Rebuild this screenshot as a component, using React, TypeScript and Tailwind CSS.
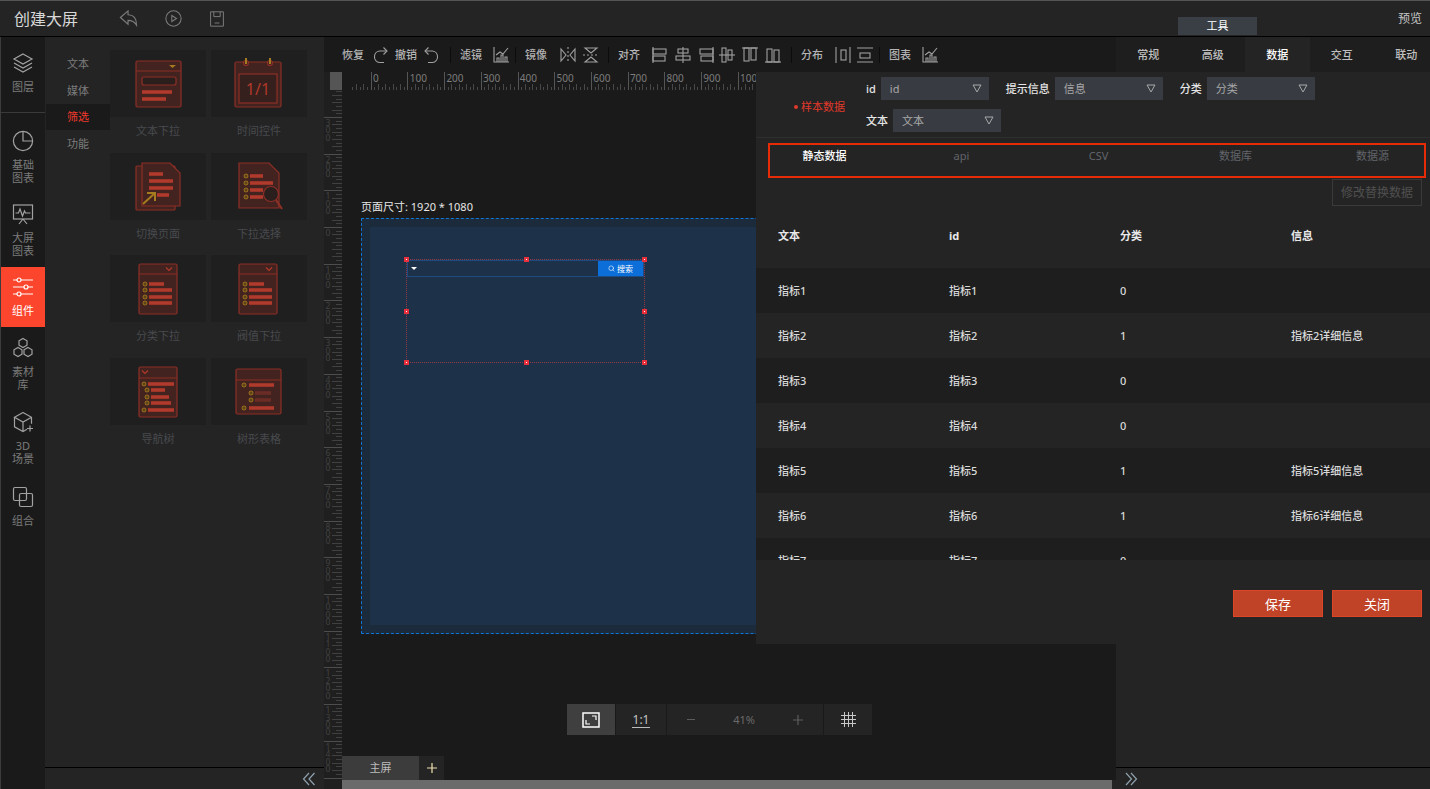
import type { ReactNode } from "react";
import { Search } from "lucide-react";

// --- shared drawing bits ---

const Ico = ({ size = 22, box = 22, children, className = "" }: { size?: number; box?: number; children: ReactNode; className?: string }) => (
  <svg width={size} height={size} viewBox={`0 0 ${box} ${box}`} fill="none" stroke="currentColor" strokeWidth={1.2} className={`shrink-0 ${className}`}>
    {children}
  </svg>
);

const navItems = [
  {
    label: ["图层"],
    cls: "h-[76px] pt-[15px] border-b border-[#3a3a3a]",
    icon: (<><path d="M11 2 20 7 11 12 2 7Z" /><path d="M2 11l9 5 9-5" /><path d="M2 15l9 5 9-5" /></>),
  },
  {
    label: ["基础", "图表"],
    cls: "h-[79px] pt-[17px]",
    icon: (<><circle cx="11" cy="11" r="9.6" /><path d="M11 1.5V11H20.5" /></>),
  },
  {
    label: ["大屏", "图表"],
    cls: "h-[75px] pt-[11px]",
    icon: (<><rect x="1.5" y="2" width="19" height="14" /><path d="M3.5 10h3l1.5-4 2.5 7 2-5 1 2h5" /><path d="M11 16l-4 5M11 16l4 5" /></>),
  },
  {
    label: ["组件"],
    cls: "h-[60px] pt-[9px] bg-[#fc452d] text-white",
    icon: (<><path d="M1 4h20M1 11h20M1 18h20" /><circle cx="7" cy="4" r="2" fill="#fc452d" /><circle cx="14" cy="11" r="2" fill="#fc452d" /><circle cx="7" cy="18" r="2" fill="#fc452d" /></>),
  },
  {
    label: ["素材", "库"],
    cls: "h-[84px] pt-[10px]",
    icon: (<><path d="M11 1.5l4 2.3v4.4l-4 2.3-4-2.3V3.8Z" /><path d="M6 10.5l4 2.3v4.4l-4 2.3-4-2.3v-4.4Z" /><path d="M16 10.5l4 2.3v4.4l-4 2.3-4-2.3v-4.4Z" /></>),
  },
  {
    label: ["3D", "场景"],
    cls: "h-[75px]",
    icon: (<><path d="M11 1.5l8.5 4.8v6.5M19.5 6.3 11 11 2.5 6.3 11 1.5M2.5 6.3v9.5l8.5 4.7 4-2.2M11 11v9.5" /><path d="M18 14.5v6M15 17.5h6" /></>),
  },
  {
    label: ["组合"],
    cls: "h-[60px]",
    icon: (<><rect x="1.5" y="1.5" width="13" height="13" rx="1.5" /><rect x="7.5" y="7.5" width="13" height="13" rx="1.5" /></>),
  },
];

const S = "#8c2f27";
const F = "#43231f";
const B = "#b03a2b";
const D = "#a67a1e";

const Bar = ({ x, y, w, dim }: { x: number; y: number; w: number; dim?: boolean }) => (
  <rect x={x} y={y - 1.8} width={w} height={3.6} fill={dim ? "#6b2c25" : B} stroke="none" />
);
const Dot = ({ x, y }: { x: number; y: number }) => (
  <rect x={x - 1.8} y={y - 1.8} width={3.6} height={3.6} rx={1.2} fill="#5f4318" stroke={D} strokeWidth={1} />
);
const Chev = ({ x, y }: { x: number; y: number }) => <path d={`M${x - 3} ${y - 1.5}l3 3 3-3`} stroke="#b03a2b" strokeWidth={1.2} fill="none" />;

const Art = ({ children }: { children: ReactNode }) => (
  <svg width="96" height="67" viewBox="0 0 96 67" fill={F} stroke={S} strokeWidth={1.2}>
    {children}
  </svg>
);

const Fold = ({ x, y, r, b }: { x: number; y: number; r: number; b: number }) => (
  <path d={`M${x} ${y}H${r - 10}L${r} ${y + 10}V${b}H${x}Z`} />
);

const listPanel = (x: number) => (
  <>
    <rect x={x} y="9" width="38" height="50" rx="1.5" />
    <path d={`M${x} 19H${x + 38}`} />
    <Chev x={x + 30} y={14} />
    {[29, 35, 42, 48].map((y, i) => (
      <g key={y}>
        <Dot x={x + 6} y={y} />
        <Bar x={x + 10} y={y} w={i === 0 ? 15 : 23} />
      </g>
    ))}
  </>
);

const cards: { label: string; art: ReactNode }[] = [
  {
    label: "文本下拉",
    art: (
      <Art>
        <rect x="26" y="11" width="45" height="46" rx="1.5" />
        <path d="M26 21H71" />
        <path d="M59 15h7l-3.5 3Z" fill={D} stroke="none" />
        <rect x="32" y="27" width="34" height="8" rx="2" fill="#2a1f1d" />
        <Bar x={32} y={42} w={30} />
        <Bar x={32} y={49} w={24} />
      </Art>
    ),
  },
  {
    label: "时间控件",
    art: (
      <Art>
        <rect x="24" y="12" width="46" height="45" rx="1.5" />
        <rect x="28" y="24" width="38" height="29" fill="#35201d" />
        <circle cx="35" cy="13" r="2.5" />
        <circle cx="59" cy="13" r="2.5" />
        <path d="M35 8v6M59 8v6" stroke={D} strokeWidth="2" />
        <text x="47" y="45" textAnchor="middle" fontSize="16" fill={B} stroke="none">1/1</text>
      </Art>
    ),
  },
  {
    label: "切换页面",
    art: (
      <Art>
        <rect x="26" y="13" width="39" height="44" rx="1" />
        <Fold x={32} y={10} r={70} b={53} />
        <Bar x={39} y={21} w={14} />
        <Bar x={39} y={28} w={24} />
        <Bar x={39} y={35} w={24} />
        <Bar x={47} y={42} w={12} />
        <path d="M33 51 45 40M37 40h8v8" stroke={D} strokeWidth="2" fill="none" />
      </Art>
    ),
  },
  {
    label: "下拉选择",
    art: (
      <Art>
        <Fold x={28} y={10} r={68} b={55} />
        {[23, 30, 37, 44].map((y, i) => (
          <g key={y}>
            <Dot x={35} y={y} />
            <Bar x={39} y={y} w={i === 1 ? 23 : 13} />
          </g>
        ))}
        <path d="M65 47l6 9" strokeWidth="2.2" />
        <circle cx="60" cy="41" r="7.5" fill="#2a1f1d" />
      </Art>
    ),
  },
  { label: "分类下拉", art: <Art>{listPanel(29)}</Art> },
  { label: "阀值下拉", art: <Art>{listPanel(28)}</Art> },
  {
    label: "导航树",
    art: (
      <Art>
        <rect x="29" y="9" width="38" height="50" rx="1.5" />
        <path d="M29 20H67" />
        <Chev x={35} y={14} />
        <Dot x={34} y={26} />
        <Bar x={38} y={26} w={26} />
        <Dot x={37} y={32} />
        <Bar x={41} y={32} w={14} />
        <Dot x={37} y={39} />
        <Bar x={41} y={39} w={18} />
        <Dot x={37} y={45} />
        <Bar x={41} y={45} w={20} />
        <Dot x={34} y={52} />
        <Bar x={38} y={52} w={26} />
      </Art>
    ),
  },
  {
    label: "树形表格",
    art: (
      <Art>
        <rect x="25" y="11" width="45" height="45" rx="1.5" />
        <path d="M25 22H70" />
        <Dot x={33} y={27} />
        <Bar x={38} y={27} w={25} />
        <Dot x={40} y={35} />
        <Bar x={44} y={35} w={16} dim />
        <Dot x={40} y={42} />
        <Bar x={44} y={42} w={16} dim />
        <Dot x={33} y={50} />
        <Bar x={38} y={50} w={25} />
      </Art>
    ),
  },
];

const rows = [
  ["指标1", "指标1", "0", ""],
  ["指标2", "指标2", "1", "指标2详细信息"],
  ["指标3", "指标3", "0", ""],
  ["指标4", "指标4", "0", ""],
  ["指标5", "指标5", "1", "指标5详细信息"],
  ["指标6", "指标6", "1", "指标6详细信息"],
  ["指标7", "指标7", "0", ""],
];

// --- toolbar icons ---

const T = ({ children, w = 18 }: { children: ReactNode; w?: number }) => (
  <svg width={w} height="18" viewBox={`0 0 ${w} 18`} fill="none" stroke="#a0a0a0" strokeWidth={1.1} className="shrink-0">
    {children}
  </svg>
);
const ChartIco = () => (
  <T>
    <path d="M2 1V16H17" />
    <path d="M5 16v-4h2v4M9 16V9h2v7M13 16v-5h2v5M4 9l4-3 3 2 5-6" />
  </T>
);
const Sep = () => <span className="block h-[16px] w-px shrink-0 bg-[#0c0c0c]" />;
const TLabel = ({ children }: { children: ReactNode }) => <span className="shrink-0 font-medium text-[#b4b4b4]">{children}</span>;

const tabs = ["常规", "高级", "数据", "交互", "联动"];

const Select = ({ value, w = "w-[108px]" }: { value: string; w?: string }) => (
  <div className={`flex h-[23px] ${w} items-center justify-between bg-[#383c42] pl-[9px] pr-[7px] text-[#a8a8a8]`}>
    <span>{value}</span>
    <svg width="10" height="9" viewBox="0 0 10 9" fill="none" stroke="#a8a8a8">
      <path d="M1 1h8L5 8Z" />
    </svg>
  </div>
);

const Field = ({ label, value }: { label: string; value: string }) => (
  <div className="flex items-center gap-[5px]">
    <span className="font-medium text-[#e4e4e4]">{label}</span>
    <Select value={value} />
  </div>
);

// --- rulers ---

const step = 36.7;

const HRuler = () => (
  <svg width="774" height="18" className="block" shapeRendering="crispEdges">
    {Array.from({ length: 211 }).map((_, i) => {
      const x = Math.round(28.7 + (i - 5) * (step / 10));
      const major = (i - 5) % 10 === 0;
      const mid = (i - 5) % 2 !== 0;
      if (x < 0) return null;
      return <line key={i} x1={x + 0.5} x2={x + 0.5} y1={major ? 0 : mid ? 15 : 12} y2={18} stroke={major ? "#555" : "#484848"} />;
    })}
    {Array.from({ length: 11 }).map((_, i) => (
      <text key={i} x={31 + i * step} y={9.5} fontSize="10" fill="#7c7c7c" shapeRendering="auto">
        {i * 100}
      </text>
    ))}
  </svg>
);

const VRuler = () => (
  <svg width="18" height="699" className="block shrink-0 bg-[#1f1f1f]" shapeRendering="crispEdges">
    {Array.from({ length: 191 }).map((_, i) => {
      const y = Math.round(137 - 40 * (step / 10) + i * (step / 10));
      const major = i % 10 === 0;
      const mid = i % 2 !== 0;
      return <line key={i} x1={major ? 0 : mid ? 12 : 8} x2={18} y1={y + 0.5} y2={y + 0.5} stroke={major ? "#4d4d4d" : "#404040"} />;
    })}
    {Array.from({ length: 18 }).map((_, i) => {
      const n = i - 3;
      const y = 137 + n * step;
      return String(Math.abs(n) * 100)
        .split("")
        .map((c, j) => (
          <text key={`${i}-${j}`} x={1.5} y={y + 9 + j * 7.4} fontSize="8.5" fill="#424242" shapeRendering="auto">
            {c}
          </text>
        ));
    })}
  </svg>
);

const handles = [
  "-left-[3px] -top-[3px]",
  "left-1/2 -top-[3px] -ml-[2px]",
  "-right-[3px] -top-[3px]",
  "-left-[3px] top-1/2 -mt-[2px]",
  "-right-[3px] top-1/2 -mt-[2px]",
  "-left-[3px] -bottom-[3px]",
  "left-1/2 -bottom-[3px] -ml-[2px]",
  "-right-[3px] -bottom-[3px]",
];

export default function App() {
  return (
    <div className="flex h-[789px] w-[1430px] flex-col overflow-hidden bg-[#1a1a1a] font-['Noto_Sans','Noto_Sans_CJK_SC',sans-serif] text-[11px] leading-[18px]">
      {/* header */}
      <header className="flex h-[37px] shrink-0 items-center border-b border-t border-b-black border-t-[#555] bg-[#242424]">
        <span className="ml-[14px] w-[64px] text-[16px] text-[#d8d8d8]">创建大屏</span>
        <div className="ml-[41px] flex items-center gap-[27px] text-[#7d7d7d]">
          <Ico size={19} box={20}><path d="M1.5 9 9.5 2v4c6 0 9 4 9 11-2.500-4-5-5-9-5v4Z" /></Ico>
          <Ico size={17} box={20}><circle cx="10" cy="10" r="9" /><path d="M8 6.500v7l5.500-3.500Z" /></Ico>
          <Ico size={16} box={20}><path d="M2 1h16v18H2Z" /><path d="M6 1v6h8V1M7 15h6" /></Ico>
        </div>
        <div className="ml-auto flex h-full items-end">
          <div className="mb-[1px] flex h-[18px] w-[79px] items-center justify-center bg-[#3a3f46] text-white">工具</div>
          <span className="mb-[8px] ml-[141px] mr-[8px] text-[12px] text-[#c4c4c4]">预览</span>
        </div>
      </header>

      <div className="flex min-h-0 flex-1">
        {/* icon nav */}
        <nav className="w-[45px] shrink-0 border-l border-[#3c3c3c] bg-[#1a1a1a]">
          {navItems.map((item) => (
            <div key={item.label[0]} className={`flex flex-col items-center text-[#7a7a7a] ${item.cls}`}>
              <Ico className={item.label[0] === "组件" ? "text-white" : "text-[#a2a2a2]"}>{item.icon}</Ico>
              <div className="mt-[6px] text-center leading-[13px]">
                {item.label.map((l) => (
                  <div key={l}>{l}</div>
                ))}
              </div>
            </div>
          ))}
        </nav>

        {/* component panel */}
        <aside className="flex w-[279px] shrink-0 flex-col bg-[#242424]">
          <div className="flex flex-1 pt-[13px]">
            <ul className="ml-px w-[64px] shrink-0 text-center text-[#7c7c7c]">
              <li className="leading-[27px]">文本</li>
              <li className="leading-[27px]">媒体</li>
              <li className="bg-[#1a1a1a] leading-[26px] text-[#f0392b]">筛选</li>
              <li className="leading-[27px]">功能</li>
            </ul>
            <div className="grid w-[197px] grid-cols-2 content-start gap-x-[5px]">
              {cards.map((c) => (
                <div key={c.label} className="h-[102.6px]">
                  <div className="h-[67px] bg-[#1f1f1f]">{c.art}</div>
                  <div className="mt-[5px] text-center text-[#484a4e]">{c.label}</div>
                </div>
              ))}
            </div>
          </div>
          <div className="flex h-[22px] shrink-0 items-center justify-end border-t border-black pr-[8px]">
            <Ico size={14} box={14} className="text-[#8fa0ad]"><path d="M7 1 1.500 7 7 13M12.500 1 7 7l5.500 6" /></Ico>
          </div>
        </aside>

        {/* toolbar + stage + right panel */}
        <div className="relative flex min-w-0 flex-1 flex-col">
          <div className="flex h-[35px] shrink-0 items-center">
            <div className="flex min-w-0 flex-1 items-center overflow-hidden pl-[18px]">
              <TLabel>恢复</TLabel>
              <span className="ml-[7px]"><T><path d="M16 5H8.500a5.800 5.800 0 0 0 0 11.500H13" /><path d="M12.500 1.500 16 5l-3.500 3.500" /></T></span>
              <span className="ml-[6px]"><TLabel>撤销</TLabel></span>
              <span className="ml-[6px]"><T><path d="M2 5h7.500a5.800 5.800 0 0 1 0 11.500H5" /><path d="M5.500 1.500 2 5l3.500 3.500" /></T></span>
              <span className="ml-[9px]"><Sep /></span>
              <span className="ml-[9px]"><TLabel>滤镜</TLabel></span>
              <span className="ml-[10px]"><ChartIco /></span>
              <span className="ml-[5px]"><Sep /></span>
              <span className="ml-[9px]"><TLabel>镜像</TLabel></span>
              <span className="ml-[12px]"><T><path d="M2 3v12l5-6ZM16 3v12l-5-6Z" /><path d="M9 1v16" strokeDasharray="2 2" /></T></span>
              <span className="ml-[5px]"><T><path d="M3 2h12L9 7ZM3 16h12L9 11Z" /><path d="M1 9h16" strokeDasharray="2 2" /></T></span>
              <span className="ml-[8px]"><Sep /></span>
              <span className="ml-[9px]"><TLabel>对齐</TLabel></span>
              <span className="ml-[11px]"><T><path d="M2 1v16" /><rect x="2" y="3" width="13" height="5" /><rect x="2" y="10" width="12" height="5" /></T></span>
              <span className="ml-[5px]"><T><path d="M9 1v16" /><rect x="4" y="3" width="10" height="4" /><rect x="2" y="10" width="14" height="4" /></T></span>
              <span className="ml-[5px]"><T><path d="M16 1v16" /><rect x="3" y="3" width="13" height="5" /><rect x="4" y="10" width="12" height="5" /></T></span>
              <span className="ml-[3px]"><T><path d="M1 9h16" /><rect x="4" y="2" width="4" height="14" /><rect x="10" y="4" width="4" height="10" /></T></span>
              <span className="ml-[5px]"><T><path d="M1 2h16" /><rect x="3" y="2" width="5" height="13" /><rect x="10" y="2" width="5" height="12" /></T></span>
              <span className="ml-[5px]"><T><path d="M1 16h16" /><rect x="3" y="3" width="5" height="13" /><rect x="10" y="4" width="5" height="12" /></T></span>
              <span className="ml-[9px]"><Sep /></span>
              <span className="ml-[9px]"><TLabel>分布</TLabel></span>
              <span className="ml-[11px]"><T><path d="M2 1v16M16 1v16" /><rect x="7" y="4" width="5" height="10" /></T></span>
              <span className="ml-[4px]"><T><path d="M1 2h16M1 16h16" /><rect x="4" y="7" width="10" height="5" /></T></span>
              <span className="ml-[5px]"><Sep /></span>
              <span className="ml-[9px]"><TLabel>图表</TLabel></span>
              <span className="ml-[10px]"><ChartIco /></span>
            </div>
            <div className="flex h-full w-[314px] shrink-0 overflow-hidden bg-[#1e1e1e] text-[#c0c0c0]">
              {tabs.map((t) => (
                <div key={t} className={`flex h-full w-[64.5px] shrink-0 items-center justify-center font-medium ${t === "数据" ? "bg-[#242424] text-white" : ""}`}>
                  {t}
                </div>
              ))}
            </div>
          </div>

          <div className="flex min-h-0 flex-1">
            <div className="flex min-w-0 flex-1 flex-col">
              {/* ruler row */}
              <div className="flex h-[18px] shrink-0">
                <div className="w-[18px] shrink-0 bg-[#1f1f1f]">
                  <div className="ml-[6px] h-[18px] w-[12px] bg-[#555]" />
                </div>
                <HRuler />
              </div>
              <div className="flex min-h-0 flex-1">
                <VRuler />
                <div className="flex min-w-0 flex-1 flex-col">
                  {/* free canvas */}
                  <div className="relative min-h-0 flex-1 overflow-hidden">
                    <span className="absolute left-[19px] top-[108px] text-[#e6e6e6]">页面尺寸: 1920 * 1080</span>
                    <div className="absolute left-[19px] top-[128px] h-[416px] w-[787px] border border-dashed border-[#0e74d6] bg-[#1b2b3b] p-[8px]">
                      <div className="h-full w-full bg-[#1d3249]" />
                    </div>
                    {/* selected widget */}
                    <div className="absolute left-[64px] top-[169px] h-[104px] w-[239px] border border-dotted border-[#8f3a48]">
                      <div className="flex h-[17px] border border-[#1d4a80]">
                        <div className="flex flex-1 items-center pl-[3px]">
                          <span className="h-0 w-0 border-x-[3px] border-t-[3px] border-x-transparent border-t-white" />
                        </div>
                        <div className="flex w-[45px] items-center justify-center gap-[2px] bg-[#0c6fd9] text-[8px] leading-none text-white">
                          <Search size={7} />
                          <span>搜索</span>
                        </div>
                      </div>
                      {handles.map((h) => (
                        <span key={h} className={`absolute h-[5px] w-[5px] border-2 border-[#e8303c] bg-white ${h}`} />
                      ))}
                    </div>
                    {/* zoom bar */}
                    <div className="absolute left-[225px] top-[614px] flex h-[31px] items-stretch gap-px text-[#6a6a6a]">
                      <div className="flex w-[48px] items-center justify-center bg-[#3f3f3f] text-white">
                        <Ico size={18} box={18}>
                          <rect x="1" y="2" width="16" height="14" strokeWidth="1.5" />
                          <path d="M10 5h4v4M4 9v4h4" strokeWidth="1.2" />
                        </Ico>
                      </div>
                      <div className="flex w-[50px] items-center justify-center bg-[#242424]">
                        <span className="border-b border-[#bbb] px-[1px] text-[12px] leading-[15px] text-[#c4c4c4]">1:1</span>
                      </div>
                      <div className="flex w-[156px] items-center justify-between bg-[#242424] px-[20px]">
                        <span className="h-px w-[8px] bg-[#5c5c5c]" />
                        <span>41%</span>
                        <Ico size={10} box={10} className="text-[#5c5c5c]"><path d="M5 0v10M0 5h10" /></Ico>
                      </div>
                      <div className="flex w-[48px] items-center justify-center bg-[#242424] text-[#c8c8c8]">
                        <svg width="15" height="15" viewBox="0 0 15 15" fill="none" stroke="currentColor" strokeWidth="1" shapeRendering="crispEdges">
                          <path d="M3.500 0v15M7.500 0v15M11.500 0v15M0 3.500h15M0 7.500h15M0 11.500h15" />
                        </svg>
                      </div>
                    </div>
                  </div>
                  {/* screen tabs */}
                  <div className="flex h-[24px] shrink-0">
                    <div className="flex w-[77px] items-center justify-center bg-[#3c3c3c] text-[#bcbcbc]">主屏</div>
                    <div className="flex w-[25px] items-center justify-center bg-[#242424] text-[#f0dfae]">
                      <Ico size={10} box={10}><path d="M5 0v10M0 5h10" /></Ico>
                    </div>
                  </div>
                  <div className="flex h-[9px] shrink-0 bg-[#242424]">
                    <div className="mr-[4px] flex-1 bg-[#6b6b6b]" />
                  </div>
                </div>
              </div>
            </div>

            {/* right panel */}
            <div className="flex w-[314px] shrink-0 flex-col bg-[#242424]">
              <div className="flex-1" />
              <div className="flex h-[22px] shrink-0 items-center border-t border-black pl-[8px]">
                <Ico size={14} box={14} className="text-[#8fa0ad]"><path d="M2 1l5.500 6L2 13M7 1l5.500 6L7 13" /></Ico>
              </div>
            </div>
          </div>

          {/* data modal */}
          <div className="absolute left-[432px] right-0 top-[35px] flex h-[572px] flex-col overflow-hidden bg-[#242424]">
            <div className="flex shrink-0 border-b border-[#2e2e2e] pb-[5px]">
              <div className="flex w-[110px] shrink-0 items-center pl-[38px] pt-[10px] text-[#e0392b]">
                <span className="mr-[3px] h-[4px] w-[4px] rounded-full bg-[#e0392b]" />
                样本数据
              </div>
              <div className="pt-[5px]">
                <div className="flex gap-[17px]">
                  <Field label="id" value="id" />
                  <Field label="提示信息" value="信息" />
                  <Field label="分类" value="分类" />
                </div>
                <div className="mt-[9px]">
                  <Field label="文本" value="文本" />
                </div>
              </div>
            </div>
            <div className="ml-[12px] mr-[4px] mt-[5px] h-[35px] shrink-0 overflow-hidden border-[2px] border-[#e62b06]">
              <div className="-ml-[14px] flex pt-[2px] text-[#62656b]">
                {["静态数据", "api", "CSV", "数据库", "数据源"].map((t, i) => (
                  <div key={t} className={`w-[137px] shrink-0 text-center ${i === 0 ? "font-medium text-white" : ""}`}>
                    {t}
                  </div>
                ))}
              </div>
            </div>
            <div className="flex shrink-0 justify-end pr-[8px] pt-px">
              <button className="h-[27px] w-[90px] border border-[#3a3a3a] text-[12px] text-[#505050]">修改替换数据</button>
            </div>
            <div className="min-h-0 flex-1 overflow-hidden font-medium text-[#dadada]">
              <div className="flex h-[62px] items-center pb-[2px] pl-[22px] font-bold text-[#e8e8e8]">
                {["文本", "id", "分类", "信息"].map((h) => (
                  <div key={h} className="w-[171px] shrink-0">{h}</div>
                ))}
              </div>
              {rows.map((r, i) => (
                <div key={r[0]} className={`flex h-[45px] items-center pl-[22px] ${i % 2 === 0 ? "bg-[#1e1e1e]" : ""}`}>
                  {r.map((c, j) => (
                    <div key={j} className="w-[171px] shrink-0">{c}</div>
                  ))}
                </div>
              ))}
            </div>
            <div className="flex h-[84px] shrink-0 justify-end gap-[9px] pr-[8px] pt-[30px]">
              <button className="h-[27px] w-[90px] border border-[#dc4526] bg-[#c04227] text-[13px] text-white">保存</button>
              <button className="h-[27px] w-[90px] border border-[#dc4526] bg-[#c04227] text-[13px] text-white">关闭</button>
            </div>
          </div>
        </div>
      </div>
    </div>
  );
}
